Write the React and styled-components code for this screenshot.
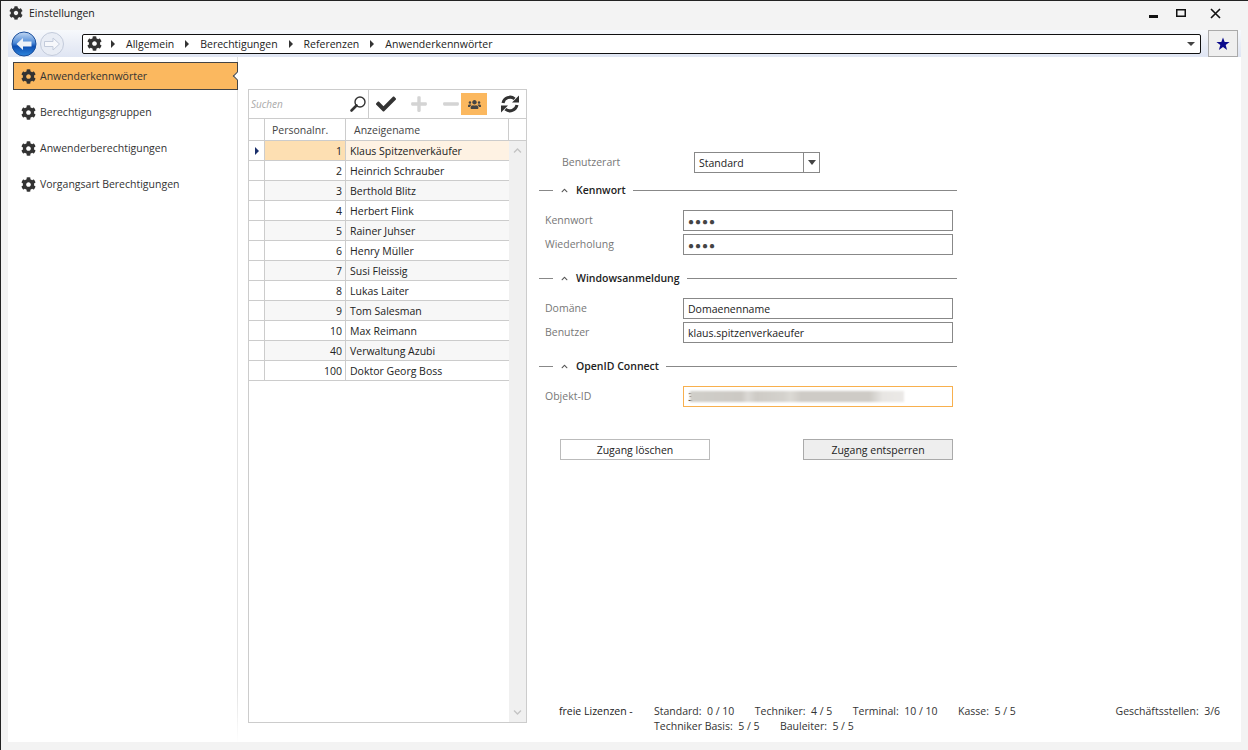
import React from 'react';
import styled, { createGlobalStyle } from 'styled-components';
import { FaCog, FaCheck, FaPlus, FaMinus, FaUsers, FaChevronUp, FaChevronDown } from 'react-icons/fa';

const GlobalStyle = createGlobalStyle`
  html, body {
    margin: 0;
    padding: 0;
    background: #f3f3f3;
  }
  body {
    font-family: "Open Sans", "Noto Sans", sans-serif;
    font-size: 10.5px;
    color: #222;
  }
`;

const Window = styled.div`
  width: 1248px;
  height: 750px;
  box-sizing: border-box;
  border-top: 1px solid #222;
  border-left: 1px solid #222;
  display: flex;
  flex-direction: column;
  overflow: hidden;
`;
const TitleBar = styled.div`
  height: 29px;
  box-sizing: border-box;
  display: flex;
  align-items: center;
  padding: 0 0 5px 8px;
  gap: 6px;
  font-size: 10.5px;
  color: #222;
`;
const TitleText = styled.span`
  flex: 1;
`;
const WinButtons = styled.div`
  display: flex;
  align-items: center;
  margin-right: 13px;
`;
const WinButton = styled.div`
  width: ${(p) => p.$w}px;
  height: 14px;
  display: flex;
  align-items: center;
  justify-content: center;
`;
const Content = styled.div`
  margin: 0 7px;
  height: 712px;
  background: #fff;
  display: flex;
  flex-direction: column;
`;
const NavBar = styled.div`
  height: 27px;
  flex: none;
  display: flex;
  align-items: center;
  padding: 0 3px 0 2px;
  background: linear-gradient(#f7f9fc 0%, #e9edf6 55%, #dfe5f3 100%);
`;
const NavRound = styled.div`
  width: 28px;
  height: 26px;
  flex: none;
  display: flex;
  align-items: center;
  justify-content: center;
`;
const Address = styled.div`
  flex: 1;
  height: 20px;
  box-sizing: border-box;
  margin-left: 16px;
  display: flex;
  align-items: center;
  background: #fff;
  border: 1px solid #111;
  border-radius: 2px;
  padding: 0 5px 0 4px;
`;
const Crumb = styled.span`
  display: flex;
  align-items: center;
  gap: 11px;
  margin-left: ${(p) => p.$ml}px;
  color: #222;
`;
const Triangle = styled.span`
  width: 0;
  height: 0;
  border-top: 4px solid transparent;
  border-bottom: 4px solid transparent;
  border-left: 4px solid ${(p) => p.color || '#333'};
`;
const CaretDown = styled.span`
  width: 0;
  height: 0;
  margin-left: auto;
  border-left: 4px solid transparent;
  border-right: 4px solid transparent;
  border-top: 4px solid #444;
`;
const StarButton = styled.div`
  width: 30px;
  height: 27px;
  margin-left: 7px;
  box-sizing: border-box;
  background: #efefef;
  border: 1px solid #aaa;
  display: flex;
  align-items: center;
  justify-content: center;
`;
const Body = styled.div`
  flex: 1;
  display: flex;
  min-height: 0;
`;
const Sidebar = styled.div`
  width: 230px;
  box-sizing: border-box;
  flex: none;
  padding: 5px 0 0 5px;
  border-right: 1px solid;
  border-image: linear-gradient(#e2e2e2 92%, #fff) 1;
  display: flex;
  flex-direction: column;
  gap: 8px;
`;
const MenuItem = styled.div`
  height: 28px;
  box-sizing: border-box;
  display: flex;
  align-items: center;
  gap: 4px;
  padding-left: 7px;
  margin-right: -1px;
  color: #333;
  border: 1px solid ${(p) => (p.$active ? '#444' : 'transparent')};
  background: ${(p) => (p.$active ? '#fbb85f' : 'transparent')};
  position: relative;
`;
const Notch = styled.span`
  position: absolute;
  right: -3px;
  top: 10px;
  width: 6px;
  height: 6px;
  box-sizing: border-box;
  background: #fff;
  border-left: 1px solid #444;
  border-bottom: 1px solid #444;
  transform: rotate(45deg);
`;
const GridPanel = styled.div`
  width: 279px;
  height: 634px;
  flex: none;
  box-sizing: border-box;
  margin: 32px 0 0 10px;
  border: 1px solid #ccc;
  display: flex;
  flex-direction: column;
`;
const Toolbar = styled.div`
  height: 28px;
  flex: none;
  display: flex;
  align-items: center;
  border-bottom: 1px solid #ccc;
`;
const SearchBox = styled.div`
  width: 120px;
  height: 100%;
  flex: none;
  box-sizing: border-box;
  display: flex;
  align-items: center;
  justify-content: space-between;
  padding: 0 1px 0 2px;
  border-right: 1px solid #ccc;
  font-style: italic;
  color: #aaa;
  font-size: 10px;
`;
const ToolIcon = styled.div`
  width: ${(p) => p.$w || 32}px;
  height: 100%;
  flex: none;
  display: flex;
  align-items: center;
  justify-content: center;
  color: ${(p) => p.color || '#333'};
`;
const ActiveTool = styled.div`
  width: 26px;
  height: 22px;
  flex: none;
  margin-left: -6px;
  background: #fbb85f;
  display: flex;
  align-items: center;
  justify-content: center;
  color: #444;
`;
const GridBody = styled.div`
  flex: 1;
  display: grid;
  grid-template-columns: 16px 81px 163px 17px;
  grid-template-rows: 22px 1fr;
  min-height: 0;
`;
const HeaderCell = styled.div`
  box-sizing: border-box;
  display: flex;
  align-items: center;
  padding-left: ${(p) => p.$pad || 0}px;
  border-right: 1px solid #ccc;
  border-bottom: 1px solid #ccc;
  color: #444;
`;
const HeaderEnd = styled.div`
  border-bottom: 1px solid #ccc;
`;
const Rows = styled.div`
  grid-column: 1 / 4;
  display: flex;
  flex-direction: column;
`;
const Row = styled.div`
  height: 20px;
  flex: none;
  box-sizing: border-box;
  display: grid;
  grid-template-columns: 16px 81px 163px;
  border-bottom: 1px solid #ccc;
  background: ${(p) => (p.$alt ? '#f7f7f7' : '#fff')};
`;
const IndicatorCell = styled.div`
  display: flex;
  align-items: center;
  justify-content: center;
  border-right: 1px solid #ccc;
  background: #fff;
`;
const NumCell = styled.div`
  display: flex;
  align-items: center;
  justify-content: flex-end;
  padding-right: 3px;
  border-right: 1px solid #ccc;
  background: ${(p) => (p.$selected ? '#fddfb2' : 'transparent')};
`;
const NameCell = styled.div`
  display: flex;
  align-items: center;
  padding-left: 4px;
  background: ${(p) => (p.$selected ? '#fef2e3' : 'transparent')};
`;
const Scrollbar = styled.div`
  background: #f0f0f0;
  display: flex;
  flex-direction: column;
  justify-content: space-between;
  align-items: center;
  padding: 5px 0;
  color: #c4c4c4;
`;
const RightColumn = styled.div`
  flex: 1;
  display: flex;
  flex-direction: column;
  padding-left: 12px;
  min-width: 0;
`;
const Form = styled.div`
  width: 418px;
  flex: none;
  display: flex;
  flex-direction: column;
  padding-top: 95px;
`;
const TypeRow = styled.div`
  display: flex;
  align-items: center;
  height: 21px;
  padding-left: 23px;
  color: #777;
`;
const TypeLabel = styled.div`
  width: 132px;
  padding-bottom: 1px;
`;
const Select = styled.div`
  width: 126px;
  height: 21px;
  box-sizing: border-box;
  display: flex;
  align-items: center;
  border: 1px solid #888;
  padding-left: 4px;
  color: #222;
`;
const SelectArrow = styled.div`
  width: 15px;
  height: 100%;
  margin-left: auto;
  border-left: 1px solid #888;
  display: flex;
  align-items: center;
  justify-content: center;
`;
const GroupHeader = styled.div`
  display: flex;
  align-items: center;
  height: 16px;
  margin-top: ${(p) => p.$top}px;
  font-weight: 600;
  color: #222;
`;
const GroupLine = styled.div`
  height: 1px;
  background: #888;
  flex: ${(p) => (p.$short ? 'none' : 1)};
  width: ${(p) => (p.$short ? '14px' : 'auto')};
`;
const GroupTitle = styled.div`
  display: flex;
  align-items: center;
  gap: 8px;
  padding: 0 7px 0 8px;
  color: #222;
`;
const Fields = styled.div`
  display: flex;
  flex-direction: column;
  gap: 3px;
  margin-top: 12px;
`;
const FieldRow = styled.div`
  display: flex;
  align-items: center;
  height: 21px;
  padding-left: 6px;
  color: #777;
`;
const FieldLabel = styled.div`
  width: 138px;
  padding-bottom: 1px;
`;
const Input = styled.div`
  width: 270px;
  height: 21px;
  box-sizing: border-box;
  display: flex;
  align-items: center;
  padding-left: 4px;
  border: 1px solid ${(p) => (p.$focus ? '#f8b04e' : '#888')};
  color: #222;
  position: relative;
`;
const Dots = styled.span`
  font-size: 10px;
  letter-spacing: 1px;
  color: #444;
`;
const Redacted = styled.span`
  position: absolute;
  left: 6px;
  top: 4px;
  width: 214px;
  height: 11px;
  background: linear-gradient(90deg, #d0cec9 0%, #ccc9c4 24%, #dbd9d5 27%, #cecbc6 31%, #d4d2cd 44%, #dcdad5 47%, #cecbc6 52%, #cecbc6 84%, #e8e6e3 90%, #ebe9e7 100%);
  filter: blur(1.2px);
`;
const ButtonRow = styled.div`
  display: flex;
  justify-content: space-between;
  padding: 0 4px 0 21px;
  margin-top: 32px;
`;
const ActionButton = styled.div`
  width: 150px;
  height: 21px;
  box-sizing: border-box;
  display: flex;
  align-items: center;
  justify-content: center;
  border: 1px solid ${(p) => (p.$primary ? '#aaa' : '#bbb')};
  background: ${(p) => (p.$primary ? '#eee' : '#fff')};
  color: #222;
`;
const Footer = styled.div`
  margin-top: auto;
  margin-bottom: 8px;
  display: flex;
  padding: 0 21px 0 20px;
  line-height: 15px;
  color: #333;
`;
const FooterIntro = styled.div`
  width: 95px;
  flex: none;
  color: #222;
`;
const FooterStats = styled.div`
  display: flex;
  flex-direction: column;
`;
const StatLine = styled.div`
  display: flex;
  gap: 20.5px;
`;
const Branches = styled.div`
  margin-left: auto;
`;

const Gear = ({ size = 15 }) => <FaCog size={size} color="#333" />;

const BackButton = () => (
  <svg width="26" height="26" viewBox="0 0 26 26">
    <defs>
      <linearGradient id="backFill" x1="0" y1="0" x2="0" y2="1">
        <stop offset="0" stopColor="#c3d8f3" />
        <stop offset="0.45" stopColor="#4f8bd8" />
        <stop offset="0.6" stopColor="#0d4fb3" />
        <stop offset="1" stopColor="#2f86dc" />
      </linearGradient>
    </defs>
    <circle cx="13" cy="13" r="12" fill="url(#backFill)" stroke="#1b4f9c" />
    <path d="M5.5 13 L12 7 V10.5 H20.5 V15.5 H12 V19 Z" fill="#eef2f8" />
  </svg>
);

const ForwardButton = () => (
  <svg width="26" height="26" viewBox="0 0 26 26">
    <circle cx="13" cy="13" r="11.5" fill="#e9edf5" stroke="#c3cbdb" />
    <path d="M20.5 13 L14 7 V10.5 H5.5 V15.5 H14 V19 Z" fill="#f7f8fb" stroke="#c3cbdb" />
  </svg>
);

const StarIcon = () => (
  <svg width="14" height="14" viewBox="0 0 14 14">
    <path d="M7 0.5 L8.7 5.1 H13.6 L9.7 8.1 L11.1 13 L7 10.1 L2.9 13 L4.3 8.1 L0.4 5.1 H5.3 Z" fill="#0a0a8c" />
  </svg>
);

const SearchIcon = () => (
  <svg width="18" height="18" viewBox="0 0 18 18">
    <circle cx="11" cy="7" r="5" fill="none" stroke="#333" strokeWidth="1.4" />
    <path d="M7.5 10.5 L2.5 15.5" stroke="#333" strokeWidth="2.6" strokeLinecap="round" />
  </svg>
);

const RefreshIcon = () => (
  <svg width="20" height="20" viewBox="0 0 20 20">
    <path d="M3 9 A7.2 7.2 0 0 1 14.6 4.8" fill="none" stroke="#333" strokeWidth="3" />
    <path d="M12 8.5 H19 V1.5 Z" fill="#333" />
    <path d="M17 11 A7.2 7.2 0 0 1 5.4 15.2" fill="none" stroke="#333" strokeWidth="3" />
    <path d="M8 11.5 H1 V18.5 Z" fill="#333" />
  </svg>
);

const people = [
  [1, 'Klaus Spitzenverkäufer'],
  [2, 'Heinrich Schrauber'],
  [3, 'Berthold Blitz'],
  [4, 'Herbert Flink'],
  [5, 'Rainer Juhser'],
  [6, 'Henry Müller'],
  [7, 'Susi Fleissig'],
  [8, 'Lukas Laiter'],
  [9, 'Tom Salesman'],
  [10, 'Max Reimann'],
  [40, 'Verwaltung Azubi'],
  [100, 'Doktor Georg Boss'],
];

const menu = ['Anwenderkennwörter', 'Berechtigungsgruppen', 'Anwenderberechtigungen', 'Vorgangsart Berechtigungen'];
const crumbs = ['Allgemein', 'Berechtigungen', 'Referenzen', 'Anwenderkennwörter'];

const Group = ({ title, top }) => (
  <GroupHeader $top={top}>
    <GroupLine $short />
    <GroupTitle>
      <FaChevronUp size={7} color="#555" />
      {title}
    </GroupTitle>
    <GroupLine />
  </GroupHeader>
);

const App = () => (
  <Window>
    <GlobalStyle />
    <TitleBar>
      <Gear size={14} />
      <TitleText>Einstellungen</TitleText>
      <WinButtons>
        <WinButton $w={25}>
          <svg width="10" height="10" viewBox="0 0 10 10"><rect x="0" y="7" width="9" height="3" fill="#111" /></svg>
        </WinButton>
        <WinButton $w={29}>
          <svg width="10" height="10" viewBox="0 0 10 10"><rect x="0.75" y="1.75" width="8.5" height="6.5" fill="none" stroke="#111" strokeWidth="1.5" /></svg>
        </WinButton>
        <WinButton $w={40}>
          <svg width="11" height="11" viewBox="0 0 11 11"><path d="M1 1 L10 10 M10 1 L1 10" stroke="#111" strokeWidth="1.6" /></svg>
        </WinButton>
      </WinButtons>
    </TitleBar>
    <Content>
      <NavBar>
        <NavRound><BackButton /></NavRound>
        <NavRound><ForwardButton /></NavRound>
        <Address>
          <Gear />
          {crumbs.map((c, i) => (
            <Crumb key={c} $ml={i === 0 ? 9 : 11}>
              <Triangle />
              {c}
            </Crumb>
          ))}
          <CaretDown />
        </Address>
        <StarButton><StarIcon /></StarButton>
      </NavBar>
      <Body>
        <Sidebar>
          {menu.map((m, i) => (
            <MenuItem key={m} $active={i === 0}>
              <Gear />
              {m}
              {i === 0 && <Notch />}
            </MenuItem>
          ))}
        </Sidebar>
        <GridPanel>
          <Toolbar>
            <SearchBox>
              Suchen
              <SearchIcon />
            </SearchBox>
            <ToolIcon $w={34}><FaCheck size={20} /></ToolIcon>
            <ToolIcon $w={32} color="#d4d4d4"><FaPlus size={18} /></ToolIcon>
            <ToolIcon $w={32} color="#d4d4d4"><FaMinus size={18} /></ToolIcon>
            <ActiveTool><FaUsers size={13} /></ActiveTool>
            <ToolIcon $w={46}><RefreshIcon /></ToolIcon>
          </Toolbar>
          <GridBody>
            <HeaderCell />
            <HeaderCell $pad={7}>Personalnr.</HeaderCell>
            <HeaderCell $pad={8}>Anzeigename</HeaderCell>
            <HeaderEnd />
            <Rows>
              {people.map(([num, name], i) => (
                <Row key={num} $alt={i % 2 === 0 && i > 0}>
                  <IndicatorCell>{i === 0 && <Triangle color="#1a2f6b" />}</IndicatorCell>
                  <NumCell $selected={i === 0}>{num}</NumCell>
                  <NameCell $selected={i === 0}>{name}</NameCell>
                </Row>
              ))}
            </Rows>
            <Scrollbar>
              <FaChevronUp size={9} />
              <FaChevronDown size={9} />
            </Scrollbar>
          </GridBody>
        </GridPanel>
        <RightColumn>
          <Form>
            <TypeRow>
              <TypeLabel>Benutzerart</TypeLabel>
              <Select>
                Standard
                <SelectArrow>
                  <svg width="8" height="5" viewBox="0 0 8 5"><path d="M0 0 H8 L4 5 Z" fill="#444" /></svg>
                </SelectArrow>
              </Select>
            </TypeRow>
            <Group title="Kennwort" top={9} />
            <Fields>
              <FieldRow>
                <FieldLabel>Kennwort</FieldLabel>
                <Input><Dots>●●●●</Dots></Input>
              </FieldRow>
              <FieldRow>
                <FieldLabel>Wiederholung</FieldLabel>
                <Input><Dots>●●●●</Dots></Input>
              </FieldRow>
            </Fields>
            <Group title="Windowsanmeldung" top={15} />
            <Fields>
              <FieldRow>
                <FieldLabel>Domäne</FieldLabel>
                <Input>Domaenenname</Input>
              </FieldRow>
              <FieldRow>
                <FieldLabel>Benutzer</FieldLabel>
                <Input>klaus.spitzenverkaeufer</Input>
              </FieldRow>
            </Fields>
            <Group title="OpenID Connect" top={15} />
            <Fields>
              <FieldRow>
                <FieldLabel>Objekt-ID</FieldLabel>
                <Input $focus>3<Redacted /></Input>
              </FieldRow>
            </Fields>
            <ButtonRow>
              <ActionButton>Zugang löschen</ActionButton>
              <ActionButton $primary>Zugang entsperren</ActionButton>
            </ButtonRow>
          </Form>
          <Footer>
            <FooterIntro>freie Lizenzen -</FooterIntro>
            <FooterStats>
              <StatLine>
                <span>Standard:&nbsp; 0 / 10</span>
                <span>Techniker:&nbsp; 4 / 5</span>
                <span>Terminal:&nbsp; 10 / 10</span>
                <span>Kasse:&nbsp; 5 / 5</span>
              </StatLine>
              <StatLine>
                <span>Techniker Basis:&nbsp; 5 / 5</span>
                <span>Bauleiter:&nbsp; 5 / 5</span>
              </StatLine>
            </FooterStats>
            <Branches>Geschäftsstellen:&nbsp; 3/6</Branches>
          </Footer>
        </RightColumn>
      </Body>
    </Content>
  </Window>
);

export default App;
